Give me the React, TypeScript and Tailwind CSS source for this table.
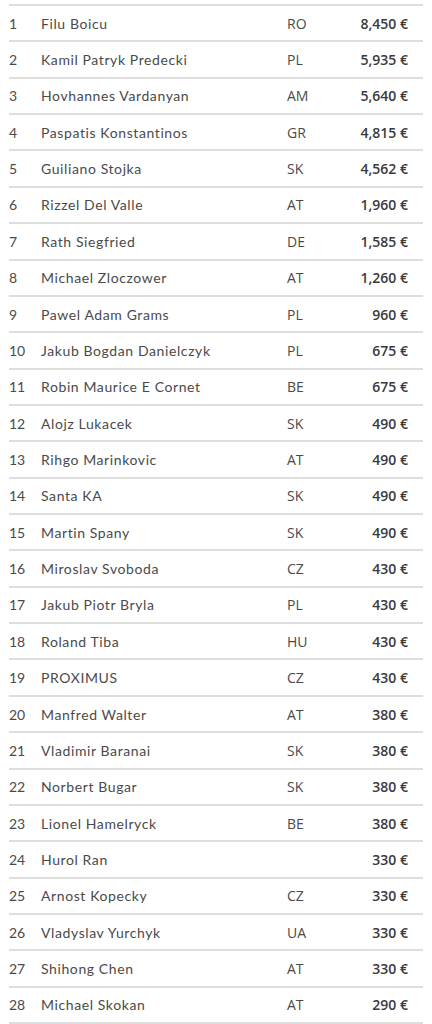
const rows: [string, string, string][] = [
  ['Filu Boicu', 'RO', '8,450 €'],
  ['Kamil Patryk Predecki', 'PL', '5,935 €'],
  ['Hovhannes Vardanyan', 'AM', '5,640 €'],
  ['Paspatis Konstantinos', 'GR', '4,815 €'],
  ['Guiliano Stojka', 'SK', '4,562 €'],
  ['Rizzel Del Valle', 'AT', '1,960 €'],
  ['Rath Siegfried', 'DE', '1,585 €'],
  ['Michael Zloczower', 'AT', '1,260 €'],
  ['Pawel Adam Grams', 'PL', '960 €'],
  ['Jakub Bogdan Danielczyk', 'PL', '675 €'],
  ['Robin Maurice E Cornet', 'BE', '675 €'],
  ['Alojz Lukacek', 'SK', '490 €'],
  ['Rihgo Marinkovic', 'AT', '490 €'],
  ['Santa KA', 'SK', '490 €'],
  ['Martin Spany', 'SK', '490 €'],
  ['Miroslav Svoboda', 'CZ', '430 €'],
  ['Jakub Piotr Bryla', 'PL', '430 €'],
  ['Roland Tiba', 'HU', '430 €'],
  ['PROXIMUS', 'CZ', '430 €'],
  ['Manfred Walter', 'AT', '380 €'],
  ['Vladimir Baranai', 'SK', '380 €'],
  ['Norbert Bugar', 'SK', '380 €'],
  ['Lionel Hamelryck', 'BE', '380 €'],
  ['Hurol Ran', '', '330 €'],
  ['Arnost Kopecky', 'CZ', '330 €'],
  ['Vladyslav Yurchyk', 'UA', '330 €'],
  ['Shihong Chen', 'AT', '330 €'],
  ['Michael Skokan', 'AT', '290 €'],
];

export default function App() {
  return (
    <div className="bg-white min-h-screen pt-[4px]">
      <div className="mx-[9px] border-b-2 border-[#dedede] text-[#4a4a4a]">
        {rows.map(([name, country, prize], i) => (
          <div
            key={i}
            className="flex items-center h-[36.36px] border-t-2 border-[#dedede] text-[14px]"
          >
            <div className="w-[32px] font-['Lato',sans-serif]">{i + 1}</div>
            <div className="flex-1 font-['Lato',sans-serif] tracking-[0.6px]">{name}</div>
            <div className="w-[70px] font-['Open_Sans',sans-serif]">{country}</div>
            <div className="w-[66px] pr-[15px] text-right font-semibold font-['Open_Sans',sans-serif] text-[#3a3a3a]">
              {prize}
            </div>
          </div>
        ))}
      </div>
    </div>
  );
}
